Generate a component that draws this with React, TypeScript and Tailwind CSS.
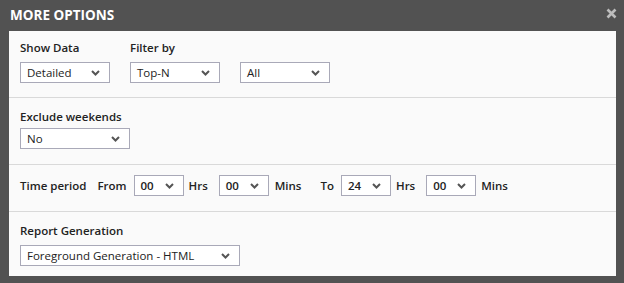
import type { ReactNode } from "react"

function Chevron() {
  return (
    <svg width="9" height="6" viewBox="0 0 9 6" className="shrink-0">
      <path d="M1 1l3.5 3.5L8 1" fill="none" stroke="#555" strokeWidth="2" />
    </svg>
  )
}

function Select({ value, width }: { value: string; width: string }) {
  return (
    <div
      className={`${width} h-[21px] flex items-center justify-between border border-[#a9a9b8] bg-white pl-[6px] pr-[9px] text-[11.5px] text-[#222]`}
    >
      <span>{value}</span>
      <Chevron />
    </div>
  )
}

function Label({ children }: { children: ReactNode }) {
  return <div className="text-[11.5px] leading-[16px] font-semibold text-[#222]">{children}</div>
}

export default function App() {
  return (
    <div
      className="w-[624px] h-[283px] bg-[#525252] flex flex-col"
      style={{ fontFamily: '"Open Sans", "Noto Sans", sans-serif' }}
    >
      <div className="h-[31px] flex items-center justify-between pl-[10px] pr-[7px]">
        <span className="text-[13.5px] font-bold text-white">MORE OPTIONS</span>
        <svg width="11" height="11" viewBox="0 0 11 11" className="mb-[5px]">
          <path d="M1.5 1.5l8 8M9.5 1.5l-8 8" stroke="#bdbdbd" strokeWidth="2.6" />
        </svg>
      </div>

      <div className="ml-[9px] mr-[8px] bg-[#fafafa] flex flex-col">
        {/* Show data / filter */}
        <div className="border-b border-[#d9d9d9] pl-[11px] pt-[9px] pb-[14px] flex gap-[20px]">
          <div className="flex flex-col gap-[6px]">
            <Label>Show Data</Label>
            <Select value="Detailed" width="w-[90px]" />
          </div>
          <div className="flex flex-col gap-[6px]">
            <Label>Filter by</Label>
            <div className="flex gap-[20px]">
              <Select value="Top-N" width="w-[90px]" />
              <Select value="All" width="w-[90px]" />
            </div>
          </div>
        </div>

        {/* Exclude weekends */}
        <div className="border-b border-[#d9d9d9] pl-[11px] pt-[11px] pb-[15px] flex flex-col gap-[3px]">
          <Label>Exclude weekends</Label>
          <Select value="No" width="w-[110px]" />
        </div>

        {/* Time period */}
        <div className="border-b border-[#d9d9d9] pl-[11px] pt-[10px] pb-[15px] flex items-center text-[11.5px] font-semibold text-[#222]">
          <span>Time period</span>
          <span className="ml-[11px] mr-[7px]">From</span>
          <Select value="00" width="w-[50px]" />
          <span className="ml-[5px] mr-[11px]">Hrs</span>
          <Select value="00" width="w-[50px]" />
          <span className="ml-[6px]">Mins</span>
          <span className="ml-[19px] mr-[7px]">To</span>
          <Select value="24" width="w-[50px]" />
          <span className="ml-[5px] mr-[11px]">Hrs</span>
          <Select value="00" width="w-[50px]" />
          <span className="ml-[5px]">Mins</span>
        </div>

        {/* Report generation */}
        <div className="pl-[11px] pt-[11px] pb-[10px] flex flex-col gap-[6px]">
          <Label>Report Generation</Label>
          <Select value="Foreground Generation - HTML" width="w-[220px]" />
        </div>
      </div>
    </div>
  )
}
